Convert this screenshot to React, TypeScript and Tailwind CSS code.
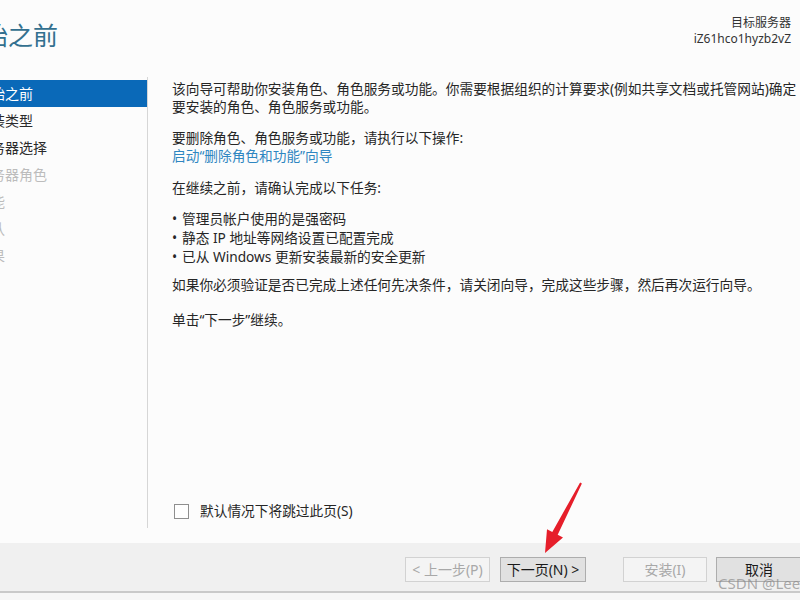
const steps = [
  { label: "开始之前", state: "active" },
  { label: "安装类型", state: "enabled" },
  { label: "服务器选择", state: "enabled" },
  { label: "服务器角色", state: "disabled" },
  { label: "功能", state: "disabled" },
  { label: "确认", state: "disabled" },
  { label: "结果", state: "disabled" },
];

const tasks = ["管理员帐户使用的是强密码", "静态 IP 地址等网络设置已配置完成", "已从 Windows 更新安装最新的安全更新"];

const WizardButton = ({ label, disabled, className = "" }: { label: string; disabled?: boolean; className?: string }) => (
  <button
    className={
      disabled
        ? `h-[25px] shrink-0 border border-[#d2d2d2] bg-[#f4f4f4] text-[14px] text-[#a8a8a8] ${className}`
        : `h-[25px] shrink-0 border border-[#adadad] bg-[#e1e1e1] text-[14px] text-[#1a1a1a] ${className}`
    }
  >
    {label}
  </button>
);

export default function App() {
  return (
    <div className="relative flex h-[600px] w-[800px] flex-col overflow-hidden bg-[#fcfcfc] font-['Noto_Sans','Noto_Sans_CJK_SC',sans-serif] text-[#262626]">
      {/* header */}
      <div className="flex h-[77px] shrink-0 items-start justify-between">
        <h1 className="-ml-[42px] pt-[20px] text-[25px] leading-[30px] font-normal text-[#33708f]">开始之前</h1>
        <div className="pt-[15px] pr-[9px] text-right text-[12px] leading-[16px] text-[#333]">
          <div>目标服务器</div>
          <div>iZ61hco1hyzb2vZ</div>
        </div>
      </div>

      {/* body */}
      <div className="flex h-[451px] shrink-0">
        <nav className="w-[148px] shrink-0 border-r border-[#d6d6d6] pt-[3px]">
          {steps.map((s) => (
            <div
              key={s.label}
              className={
                s.state === "active"
                  ? "flex h-[27px] items-center bg-[#0a69b8] text-white"
                  : s.state === "enabled"
                    ? "flex h-[27px] items-center text-[#2b2b2b]"
                    : "flex h-[27px] items-center text-[#bcbcbc]"
              }
            >
              <span className="-ml-[23px] text-[14px] whitespace-nowrap">{s.label}</span>
            </div>
          ))}
        </nav>

        <div className="flex flex-1 flex-col pt-[3px] pl-[24px] text-[13.7px]">
          <p className="leading-[18px]">
            <span className="block whitespace-nowrap">该向导可帮助你安装角色、角色服务或功能。你需要根据组织的计算要求(例如共享文档或托管网站)确定</span>
            <span className="block">要安装的角色、角色服务或功能。</span>
          </p>
          <p className="mt-[13px] leading-[18px]">
            要删除角色、角色服务或功能，请执行以下操作:
            <br />
            <a className="text-[#2e86c1]">启动“删除角色和功能”向导</a>
          </p>
          <p className="mt-[14px] leading-[18px]">在继续之前，请确认完成以下任务:</p>
          <ul className="mt-[12px] leading-[19px]">
            {tasks.map((t) => (
              <li key={t} className="flex">
                <span className="w-[10px] shrink-0">•</span>
                <span>{t}</span>
              </li>
            ))}
          </ul>
          <p className="mt-[10px] leading-[18px]">如果你必须验证是否已完成上述任何先决条件，请关闭向导，完成这些步骤，然后再次运行向导。</p>
          <p className="mt-[17px] leading-[18px]">单击“下一步”继续。</p>

          <label className="mt-auto mb-[8px] ml-[2px] flex items-center gap-[11px]">
            <span className="h-[15px] w-[15px] border border-[#8f8f8f] bg-white" />
            <span className="leading-[18px]">默认情况下将跳过此页(S)</span>
          </label>
        </div>
      </div>

      <div className="h-[15px] shrink-0" />

      {/* footer buttons */}
      <div className="flex h-[50px] shrink-0 items-start border-b-2 border-[#c9c9c9] bg-[#f0f0f0] pt-[14px] pl-[405px]">
        <WizardButton label="< 上一步(P)" disabled className="w-[85px]" />
        <WizardButton label="下一页(N) >" className="ml-[10px] w-[86px]" />
        <WizardButton label="安装(I)" disabled className="ml-[37px] w-[84px]" />
        <WizardButton label="取消" className="ml-[9px] w-[86px]" />
      </div>
      <div className="flex-1 bg-[#f6f6f6]" />

      {/* watermark */}
      <span className="pointer-events-none absolute top-[572px] left-[718px] text-[15px] whitespace-nowrap text-[#8a8a8a]/70">
        CSDN @Leeeee
      </span>

      {/* red pointer */}
      <svg className="pointer-events-none absolute inset-0" width="800" height="600" viewBox="0 0 800 600">
        <polygon
          points="545,553 563,537.5 557.7,534.8 581.9,483.5 580.1,482.5 552.3,532 547,529.3"
          fill="#e61e2a"
        />
      </svg>
    </div>
  );
}
